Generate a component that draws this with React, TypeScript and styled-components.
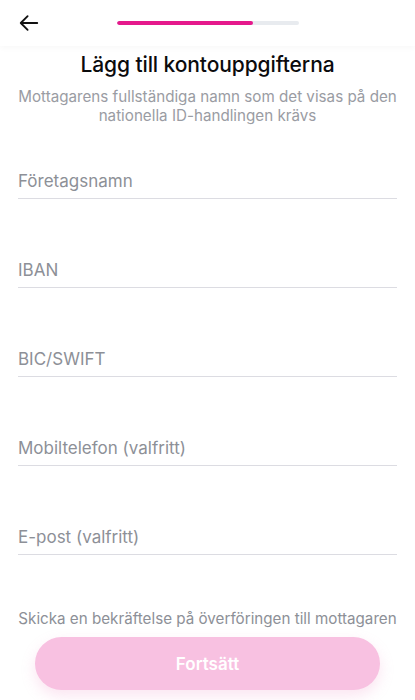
import React from "react";
import styled, { createGlobalStyle } from "styled-components";

const GlobalStyle = createGlobalStyle`
  html, body {
    margin: 0;
    padding: 0;
    background: #ffffff;
  }
  body {
    font-family: Inter, "Noto Sans", "Liberation Sans", sans-serif;
    -webkit-font-smoothing: antialiased;
  }
`;

const fields = [
  "Företagsnamn",
  "IBAN",
  "BIC/SWIFT",
  "Mobiltelefon (valfritt)",
  "E-post (valfritt)"
];

const progress = 0.75;

const App: React.FC = () => {
  return (
    <Screen>
      <GlobalStyle />
      <Header>
        <BackButton aria-label="Tillbaka">
          <svg width="22" height="22" viewBox="0 0 24 24" fill="none">
            <path
              d="M21 12H3.5M10.5 4.5L3 12l7.5 7.5"
              stroke="#111"
              strokeWidth="2"
              strokeLinecap="round"
              strokeLinejoin="round"
            />
          </svg>
        </BackButton>
        <Track>
          <Fill style={{ width: `${progress * 100}%` }} />
        </Track>
      </Header>

      <Body>
        <Title>Lägg till kontouppgifterna</Title>
        <Subtitle>
          Mottagarens fullständiga namn som det visas på den nationella
          ID-handlingen krävs
        </Subtitle>

        <Form>
          {fields.map(label => (
            <Field key={label}>
              <Input placeholder={label} />
            </Field>
          ))}
        </Form>
      </Body>

      <Footer>
        <Note>Skicka en bekräftelse på överföringen till mottagaren</Note>
        <ContinueButton disabled>Fortsätt</ContinueButton>
      </Footer>
    </Screen>
  );
};

export default App;

const Screen = styled.div`
  display: flex;
  flex-direction: column;
  height: 700px;
  overflow: hidden;
  background: #ffffff;
`;

const Header = styled.header`
  position: relative;
  display: flex;
  align-items: center;
  justify-content: center;
  height: 46px;
  box-shadow: 0 2px 6px rgba(0, 0, 0, 0.03);
  flex-shrink: 0;
`;

const BackButton = styled.button`
  position: absolute;
  left: 14px;
  top: 10px;
  display: flex;
  align-items: center;
  justify-content: center;
  width: 30px;
  height: 26px;
  padding: 0;
  border: none;
  background: none;
`;

const Track = styled.div`
  width: 182px;
  height: 4px;
  border-radius: 2px;
  background: #e8ebef;
  overflow: hidden;
`;

const Fill = styled.div`
  height: 100%;
  border-radius: 2px;
  background: #e5198c;
`;

const Body = styled.main`
  flex: 1;
  display: flex;
  flex-direction: column;
  padding: 0 18px;
`;

const Title = styled.h1`
  margin: 7px 0 0;
  font-size: 21px;
  line-height: 24px;
  font-weight: 500;
  color: #0b0b0d;
  text-align: center;
  letter-spacing: -0.1px;
`;

const Subtitle = styled.p`
  margin: 10px 0 0;
  font-size: 15.2px;
  line-height: 19px;
  color: #9a9ca3;
  text-align: center;
`;

const Form = styled.div`
  display: flex;
  flex-direction: column;
`;

const Field = styled.div`
  padding-top: 44px;
  border-bottom: 1px solid #dcdce2;

  &:first-child {
    padding-top: 29px;
  }
`;

const Input = styled.input`
  display: block;
  width: 100%;
  box-sizing: border-box;
  height: 44px;
  padding: 16px 0 6px;
  border: none;
  outline: none;
  background: transparent;
  font-family: inherit;
  font-size: 17px;
  line-height: 22px;
  color: #111;

  &::placeholder {
    color: #8d9097;
  }
`;

const Footer = styled.footer`
  display: flex;
  flex-direction: column;
  align-items: center;
  padding: 0 18px 10px;
`;

const Note = styled.p`
  margin: 0 0 8px;
  font-size: 15.2px;
  line-height: 20px;
  color: #8d9097;
  text-align: center;
  white-space: nowrap;
`;

const ContinueButton = styled.button`
  width: 345px;
  height: 53px;
  border: none;
  border-radius: 27px;
  background: #f8c1e1;
  color: #ffffff;
  font-family: inherit;
  font-size: 17px;
  font-weight: 600;
  box-shadow: 0 6px 14px rgba(240, 150, 200, 0.25);
`;
